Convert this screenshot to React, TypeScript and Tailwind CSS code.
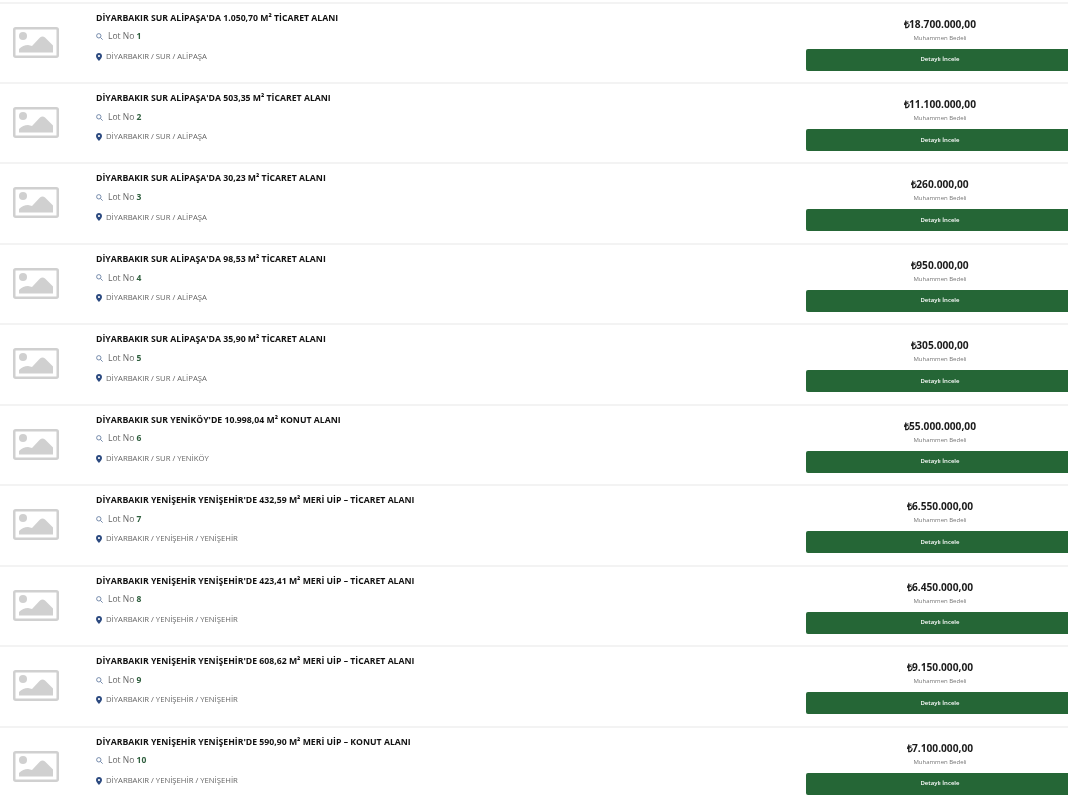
import React from 'react';

const lots = [
  { title: "DİYARBAKIR SUR ALİPAŞA'DA 1.050,70 M² TİCARET ALANI", place: 'DİYARBAKIR / SUR / ALİPAŞA', price: '18.700.000,00' },
  { title: "DİYARBAKIR SUR ALİPAŞA'DA 503,35 M² TİCARET ALANI", place: 'DİYARBAKIR / SUR / ALİPAŞA', price: '11.100.000,00' },
  { title: "DİYARBAKIR SUR ALİPAŞA'DA 30,23 M² TİCARET ALANI", place: 'DİYARBAKIR / SUR / ALİPAŞA', price: '260.000,00' },
  { title: "DİYARBAKIR SUR ALİPAŞA'DA 98,53 M² TİCARET ALANI", place: 'DİYARBAKIR / SUR / ALİPAŞA', price: '950.000,00' },
  { title: "DİYARBAKIR SUR ALİPAŞA'DA 35,90 M² TİCARET ALANI", place: 'DİYARBAKIR / SUR / ALİPAŞA', price: '305.000,00' },
  { title: "DİYARBAKIR SUR YENİKÖY'DE 10.998,04 M² KONUT ALANI", place: 'DİYARBAKIR / SUR / YENİKÖY', price: '55.000.000,00' },
  { title: "DİYARBAKIR YENİŞEHİR YENİŞEHİR'DE 432,59 M² MERİ UİP – TİCARET ALANI", place: 'DİYARBAKIR / YENİŞEHİR / YENİŞEHİR', price: '6.550.000,00' },
  { title: "DİYARBAKIR YENİŞEHİR YENİŞEHİR'DE 423,41 M² MERİ UİP – TİCARET ALANI", place: 'DİYARBAKIR / YENİŞEHİR / YENİŞEHİR', price: '6.450.000,00' },
  { title: "DİYARBAKIR YENİŞEHİR YENİŞEHİR'DE 608,62 M² MERİ UİP – TİCARET ALANI", place: 'DİYARBAKIR / YENİŞEHİR / YENİŞEHİR', price: '9.150.000,00' },
  { title: "DİYARBAKIR YENİŞEHİR YENİŞEHİR'DE 590,90 M² MERİ UİP – KONUT ALANI", place: 'DİYARBAKIR / YENİŞEHİR / YENİŞEHİR', price: '7.100.000,00' },
];

const Placeholder = () => (
  <svg width="46" height="31" viewBox="0 0 46 31" className="block">
    <rect x="1.25" y="1.25" width="43.5" height="28.5" rx="1.5" fill="#fff" stroke="#d0d0d0" strokeWidth="2.5" />
    <circle cx="10" cy="9" r="4" fill="#d0d0d0" />
    <path d="M6 25.5 L6 22 Q10 18 15 18 L19 19 L27 10.5 Q29.5 8.5 32 10.5 L40 18.5 L40 25.5 Z" fill="#d0d0d0" />
  </svg>
);

const SearchIcon = () => (
  <svg width="7" height="7" viewBox="0 0 8 8" fill="none" stroke="#6f85a8" strokeWidth="1.1" className="shrink-0">
    <circle cx="3.2" cy="3.2" r="2.5" />
    <path d="M5 5 L7.6 7.6" />
  </svg>
);

const PinIcon = () => (
  <svg width="6" height="8" viewBox="0 0 6 8" className="shrink-0">
    <path fillRule="evenodd" d="M3 0C1.3 0 0 1.3 0 3c0 2 3 5 3 5s3-3 3-5C6 1.3 4.7 0 3 0zm0 4.1a1.1 1.1 0 1 1 0-2.2 1.1 1.1 0 0 1 0 2.2z" fill="#2c4a80" />
  </svg>
);

const App = () => {
  return (
    <div className="h-[803px] overflow-hidden bg-white pt-[1.6px] font-['Open_Sans',sans-serif] blur-[0.3px]">
      {lots.map((lot, i) => (
        <div key={lot.title} className="flex h-[80.45px] border-t-2 border-[#f3f3f3]">
          <div className="w-[96px] shrink-0 pl-[13px] pt-[23px]">
            <Placeholder />
          </div>
          <div className="flex-1 pt-[7px]">
            <h3 className="text-[8.7px] leading-[14px] font-bold text-[#111]">{lot.title}</h3>
            <div className="mt-[5px] flex h-[14px] items-center gap-[5px] text-[8.5px] text-[#666]">
              <SearchIcon />
              <span>
                Lot No <b className="font-bold text-[#2f5f3e]">{i + 1}</b>
              </span>
            </div>
            <div className="mt-[6px] flex h-[14px] items-center gap-[4px] text-[7.7px] text-[#666]">
              <PinIcon />
              <span>{lot.place}</span>
            </div>
          </div>
          <div className="mr-[-6px] flex w-[268px] shrink-0 flex-col items-center pt-[13px]">
            <div className="flex items-baseline text-[10.2px] leading-[14px] font-bold text-[#1b1b1b]">
              <span className="mr-[-1px] font-['Liberation_Sans',sans-serif]">₺</span>
              <span>{lot.price}</span>
            </div>
            <div className="mt-[1px] text-[6px] leading-[11px] text-[#777]">Muhammen Bedeli</div>
            <button className="mt-[5px] h-[22px] w-full rounded-[2px] bg-[#256636] text-[6px] font-semibold text-white">
              Detaylı İncele
            </button>
          </div>
        </div>
      ))}
    </div>
  );
};

export default App;
